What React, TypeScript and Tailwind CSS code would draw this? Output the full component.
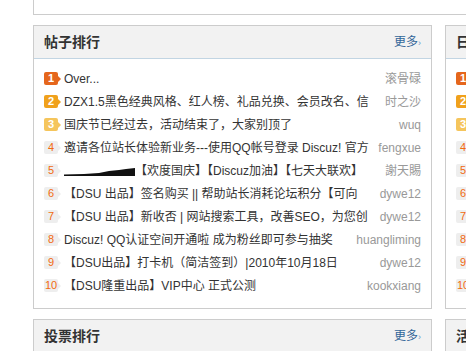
import React from "react";

const font = { fontFamily: '"Liberation Sans", "Noto Sans CJK SC", sans-serif' };

const posts = [
  { title: "Over...", author: "滚骨碌" },
  { title: "DZX1.5黑色经典风格、红人榜、礼品兑换、会员改名、信", author: "时之沙" },
  { title: "国庆节已经过去，活动结束了，大家别顶了", author: "wuq" },
  { title: "邀请各位站长体验新业务---使用QQ帐号登录 Discuz! 官方", author: "fengxue" },
  { title: "bar", author: "謝天賜" },
  { title: "【DSU 出品】签名购买 || 帮助站长消耗论坛积分【可向", author: "dywe12" },
  { title: "【DSU 出品】新收否 | 网站搜索工具，改善SEO，为您创", author: "dywe12" },
  { title: "Discuz! QQ认证空间开通啦 成为粉丝即可参与抽奖", author: "huangliming" },
  { title: "【DSU出品】打卡机（简洁签到）|2010年10月18日", author: "dywe12" },
  { title: "【DSU隆重出品】VIP中心 正式公测", author: "kookxiang" },
];

function Badge({ n }: { n: number }) {
  const top =
    n === 1 ? "bg-[#e5661c]" : n === 2 ? "bg-[#f0a11c]" : n === 3 ? "bg-[#f5c55c]" : "bg-[#eeeeee]";
  const arrow =
    n === 1
      ? "border-l-[#e5661c]"
      : n === 2
      ? "border-l-[#f0a11c]"
      : n === 3
      ? "border-l-[#f5c55c]"
      : "border-l-[#eeeeee]";
  const txt = n <= 3 ? "text-white font-bold" : "text-[#f26a10]";
  return (
    <span className="relative flex items-center shrink-0 w-[20px]">
      <span
        className={`${top} ${txt} w-[14px] h-[13px] rounded-[2px] flex items-center justify-center text-[11px] leading-none`}
      >
        {n}
      </span>
      <span className={`w-0 h-0 border-y-[3px] border-y-transparent border-l-[3px] ${arrow}`} />
    </span>
  );
}

function Bar() {
  return (
    <svg width="71" height="12" viewBox="0 0 71 12" className="shrink-0">
      <polygon points="0,11 0,9.5 20,9 35,8 45,6 55,5 62,4 71,3 71,11" fill="#111" />
    </svg>
  );
}

function Header({ title }: { title: string }) {
  return (
    <div className="h-[33px] bg-[#f2f2f2] border-b border-[#c2d5e3] flex items-center justify-between pl-[10px] pr-[10px]">
      <span className="text-[14px] font-bold text-[#333]">{title}</span>
      <span className="text-[12px] text-[#336699]">
        更多<span className="text-[9px] text-[#6a9ac8]">›</span>
      </span>
    </div>
  );
}

function PostPanel() {
  return (
    <div className="w-[399px] shrink-0 border border-[#cccccc] bg-white">
      <Header title="帖子排行" />
      <ul className="pt-[8px] pb-[11px] pl-[10px] pr-[10px]">
        {posts.map((p, i) => (
          <li key={i} className="h-[23px] flex items-center text-[12px]">
            <Badge n={i + 1} />
            <span className="flex-1 min-w-0 overflow-hidden whitespace-nowrap text-[#333] flex items-center">
              {p.title === "bar" ? (
                <>
                  <Bar />
                  <span>【欢度国庆】【Discuz加油】【七天大联欢】</span>
                </>
              ) : (
                p.title
              )}
            </span>
            <span className="shrink-0 pl-[6px] text-right whitespace-nowrap text-[#999]">{p.author}</span>
          </li>
        ))}
      </ul>
    </div>
  );
}

function SidePanel({ title }: { title: string }) {
  return (
    <div className="w-[399px] shrink-0 border border-[#cccccc] bg-white">
      <Header title={title} />
      <ul className="pt-[8px] pb-[11px] pl-[10px] pr-[10px]">
        {posts.map((_, i) => (
          <li key={i} className="h-[23px] flex items-center text-[12px]">
            <Badge n={i + 1} />
          </li>
        ))}
      </ul>
    </div>
  );
}

export default function App() {
  return (
    <div className="w-[466px] h-[351px] overflow-hidden bg-white" style={font}>
      <div className="pl-[33px] w-[900px]">
        <div className="w-[811px] h-[15px] border border-t-0 border-[#cccccc]" />
        <div className="flex gap-[13px] mt-[10px]">
          <PostPanel />
          <SidePanel title="日志排行" />
        </div>
        <div className="flex gap-[13px] mt-[10px]">
          <div className="w-[399px] shrink-0 border border-[#cccccc]">
            <Header title="投票排行" />
          </div>
          <div className="w-[399px] shrink-0 border border-[#cccccc]">
            <Header title="活动排行" />
          </div>
        </div>
      </div>
    </div>
  );
}
